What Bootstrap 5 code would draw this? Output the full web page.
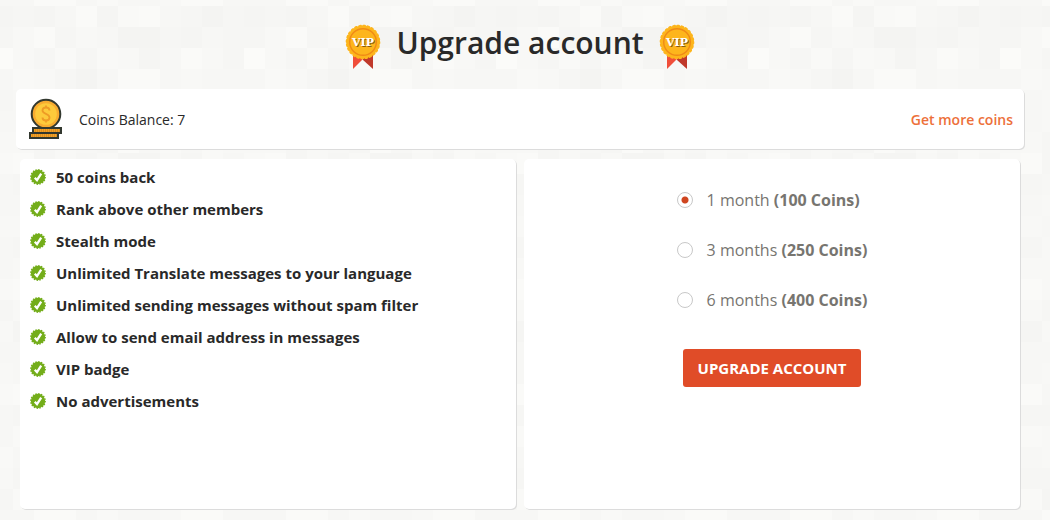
<!DOCTYPE html>
<html lang="en">
<head>
<meta charset="utf-8">
<meta name="viewport" content="width=device-width, initial-scale=1">
<title>Upgrade account</title>
<link href="https://cdn.jsdelivr.net/npm/bootstrap@5.3.0/dist/css/bootstrap.min.css" rel="stylesheet">
<style>
body{font-family:"Open Sans",sans-serif;font-size:14px;color:#292929;background-color:#f7f7f5;background-position:-8px -15px}
.page{padding:0 26px 10px 16px}
.page-header{gap:15px;padding:23px 0 18px}
.page-title{font-size:30px;font-weight:600;line-height:40px}
.medal{width:36px;height:46px}
.panel{background:#fff;border-radius:5px;box-shadow:1px 1px 0 #dcdcdc}
.balance{min-height:60px;padding:0 11px 0 12px;gap:15px;margin-bottom:10px}
.coin{width:36px;height:42px}
.more{color:#ed703a;font-weight:600}
.more:hover{color:#c9521e}
.tall{min-height:350px}
.perks{font-size:15px;font-weight:700;line-height:32px;padding:2px 10px}
.perks li{gap:10px}
.tick{width:16px;height:16px}
.plans{font-size:16px;color:#777570;padding-top:16px}
.plan{height:50px;gap:14px}
.plan .form-check-input{width:16px;height:16px;border-color:#c8c8c8;box-shadow:none}
.plan .form-check-input:checked{background-color:#fff;background-image:radial-gradient(circle,#cf4520 3px,transparent 4px)}
.btn-upgrade,.btn-upgrade:hover{background:#e04c28;color:#fff;font-size:15px;font-weight:700;line-height:22px;padding:8px 15px;border:0;border-radius:3px}
</style>
</head>
<body>
<svg class="d-none" aria-hidden="true">
  <symbol id="medal" viewBox="0 0 36 46">
    <path d="M8 31h10v4L8 45z" fill="#f04e3a"/><path d="M18 31h10v14l-10-9z" fill="#c0392b"/>
    <circle cx="18" cy="18" r="16.3" fill="#fdb51c"/>
    <circle cx="18" cy="18" r="16" fill="none" stroke="#fdb51c" stroke-width="2.6" stroke-linecap="round" stroke-dasharray="1.4 2.788"/>
    <circle cx="18" cy="18" r="13.3" fill="none" stroke="#f08a16" stroke-width="1.4"/>
    <g font-family="DejaVu Serif,serif" font-size="11" font-weight="700" text-anchor="middle"><text x="19" y="23" fill="#8a5a10">VIP</text><text x="18" y="22" fill="#fff">VIP</text></g>
  </symbol>
  <symbol id="tick" viewBox="0 0 16 16">
    <circle cx="8" cy="8" r="7.2" fill="#73ad1a"/>
    <circle cx="8" cy="8" r="7.2" fill="none" stroke="#73ad1a" stroke-width="1.4" stroke-dasharray="1.4 1.427"/>
    <path d="M4.8 8.8 7 11.2 11.2 4.6" fill="none" stroke="#fff" stroke-width="2.3"/>
  </symbol>
</svg>

<main class="page">
  <header class="page-header d-flex justify-content-center align-items-center">
    <svg class="medal" aria-hidden="true"><use href="#medal"/></svg>
    <h1 class="page-title mb-2">Upgrade account</h1>
    <svg class="medal" aria-hidden="true"><use href="#medal"/></svg>
  </header>

  <section class="panel balance d-flex align-items-center">
    <svg class="coin" viewBox="0 0 36 42" aria-hidden="true">
      <circle cx="18" cy="16" r="14.3" fill="#f8ac30" stroke="#32382f" stroke-width="2"/>
      <circle cx="18" cy="16" r="10.8" fill="#fdca3b"/>
      <path d="M21.500 12.500c0-2-1.500-3-3.500-3s-3.500 1-3.500 3c0 4 7 2.800 7 7 0 2-1.500 3-3.500 3s-3.500-1-3.500-3M18 7.500v2M18 22.500v2" fill="none" stroke="#ee9b25" stroke-width="1.800"/>
      <path d="M5 30h28v5H5zM2 35h28v5H2z" fill="#f3a126" stroke="#32382f" stroke-width="2"/>
      <path d="M7 32.500h25M4 37.500h25" stroke="#dd8f20" stroke-width="3" stroke-dasharray="1 1"/>
    </svg>
    <span>Coins Balance: 7</span>
    <a href="#" class="more ms-auto text-decoration-none">Get more coins</a>
  </section>

  <div class="row gx-2 mx-0">
    <div class="col-6">
      <div class="panel tall">
        <ul class="perks list-unstyled mb-0" id="perks"></ul>
      </div>
    </div>
    <div class="col-6">
      <form class="panel tall d-flex flex-column align-items-center">
        <div class="plans">
          <div class="plan d-flex align-items-center"><input class="form-check-input m-0" type="radio" name="plan" id="m1" checked><label for="m1">1 month <b>(100 Coins)</b></label></div>
          <div class="plan d-flex align-items-center"><input class="form-check-input m-0" type="radio" name="plan" id="m3"><label for="m3">3 months <b>(250 Coins)</b></label></div>
          <div class="plan d-flex align-items-center"><input class="form-check-input m-0" type="radio" name="plan" id="m6"><label for="m6">6 months <b>(400 Coins)</b></label></div>
        </div>
        <button type="button" class="btn btn-upgrade mt-4">UPGRADE ACCOUNT</button>
      </form>
    </div>
  </div>
</main>

<script src="https://cdn.jsdelivr.net/npm/bootstrap@5.3.0/dist/js/bootstrap.bundle.min.js"></script>
<script>
document.getElementById('perks').innerHTML = [
  '50 coins back', 'Rank above other members', 'Stealth mode',
  'Unlimited Translate messages to your language',
  'Unlimited sending messages without spam filter',
  'Allow to send email address in messages', 'VIP badge', 'No advertisements'
].map(t => `<li class="d-flex align-items-center"><svg class="tick" aria-hidden="true"><use href="#tick"/></svg><span>${t}</span></li>`).join('');

// Mosaic backdrop: one hex digit per 21px tile, higher is lighter.
const rows = ['66bb69768ba6','4547b49b6535','58a587335475','c85959847a85','698536ba7866',
 '578697586957','678597486958','885875a79698','9b5858448596','657586958476','668758697586',
 '886597486957','658597485697','788697586957','9a8597486958','585875a79698','848858448596',
 '667586958476','878758697586','9b6597486957','655597485697','798697586957','978597486958',
 '8558b5a79698','594b8584a874'];
const tiles = rows.map((r, y) => [...r].map((c, x) => {
  const v = 242 + Math.round(parseInt(c, 16) * .75);
  return `<rect x="${x*21}" y="${y*21}" width="21" height="21" fill="rgb(${v},${v},${v-2})"/>`;
}).join('')).join('');
document.body.style.backgroundImage = `url("data:image/svg+xml,${encodeURIComponent(
  `<svg xmlns="http://www.w3.org/2000/svg" width="252" height="525">${tiles}</svg>`).replace(/[()']/g, escape)}")`;
</script>
</body>
</html>
